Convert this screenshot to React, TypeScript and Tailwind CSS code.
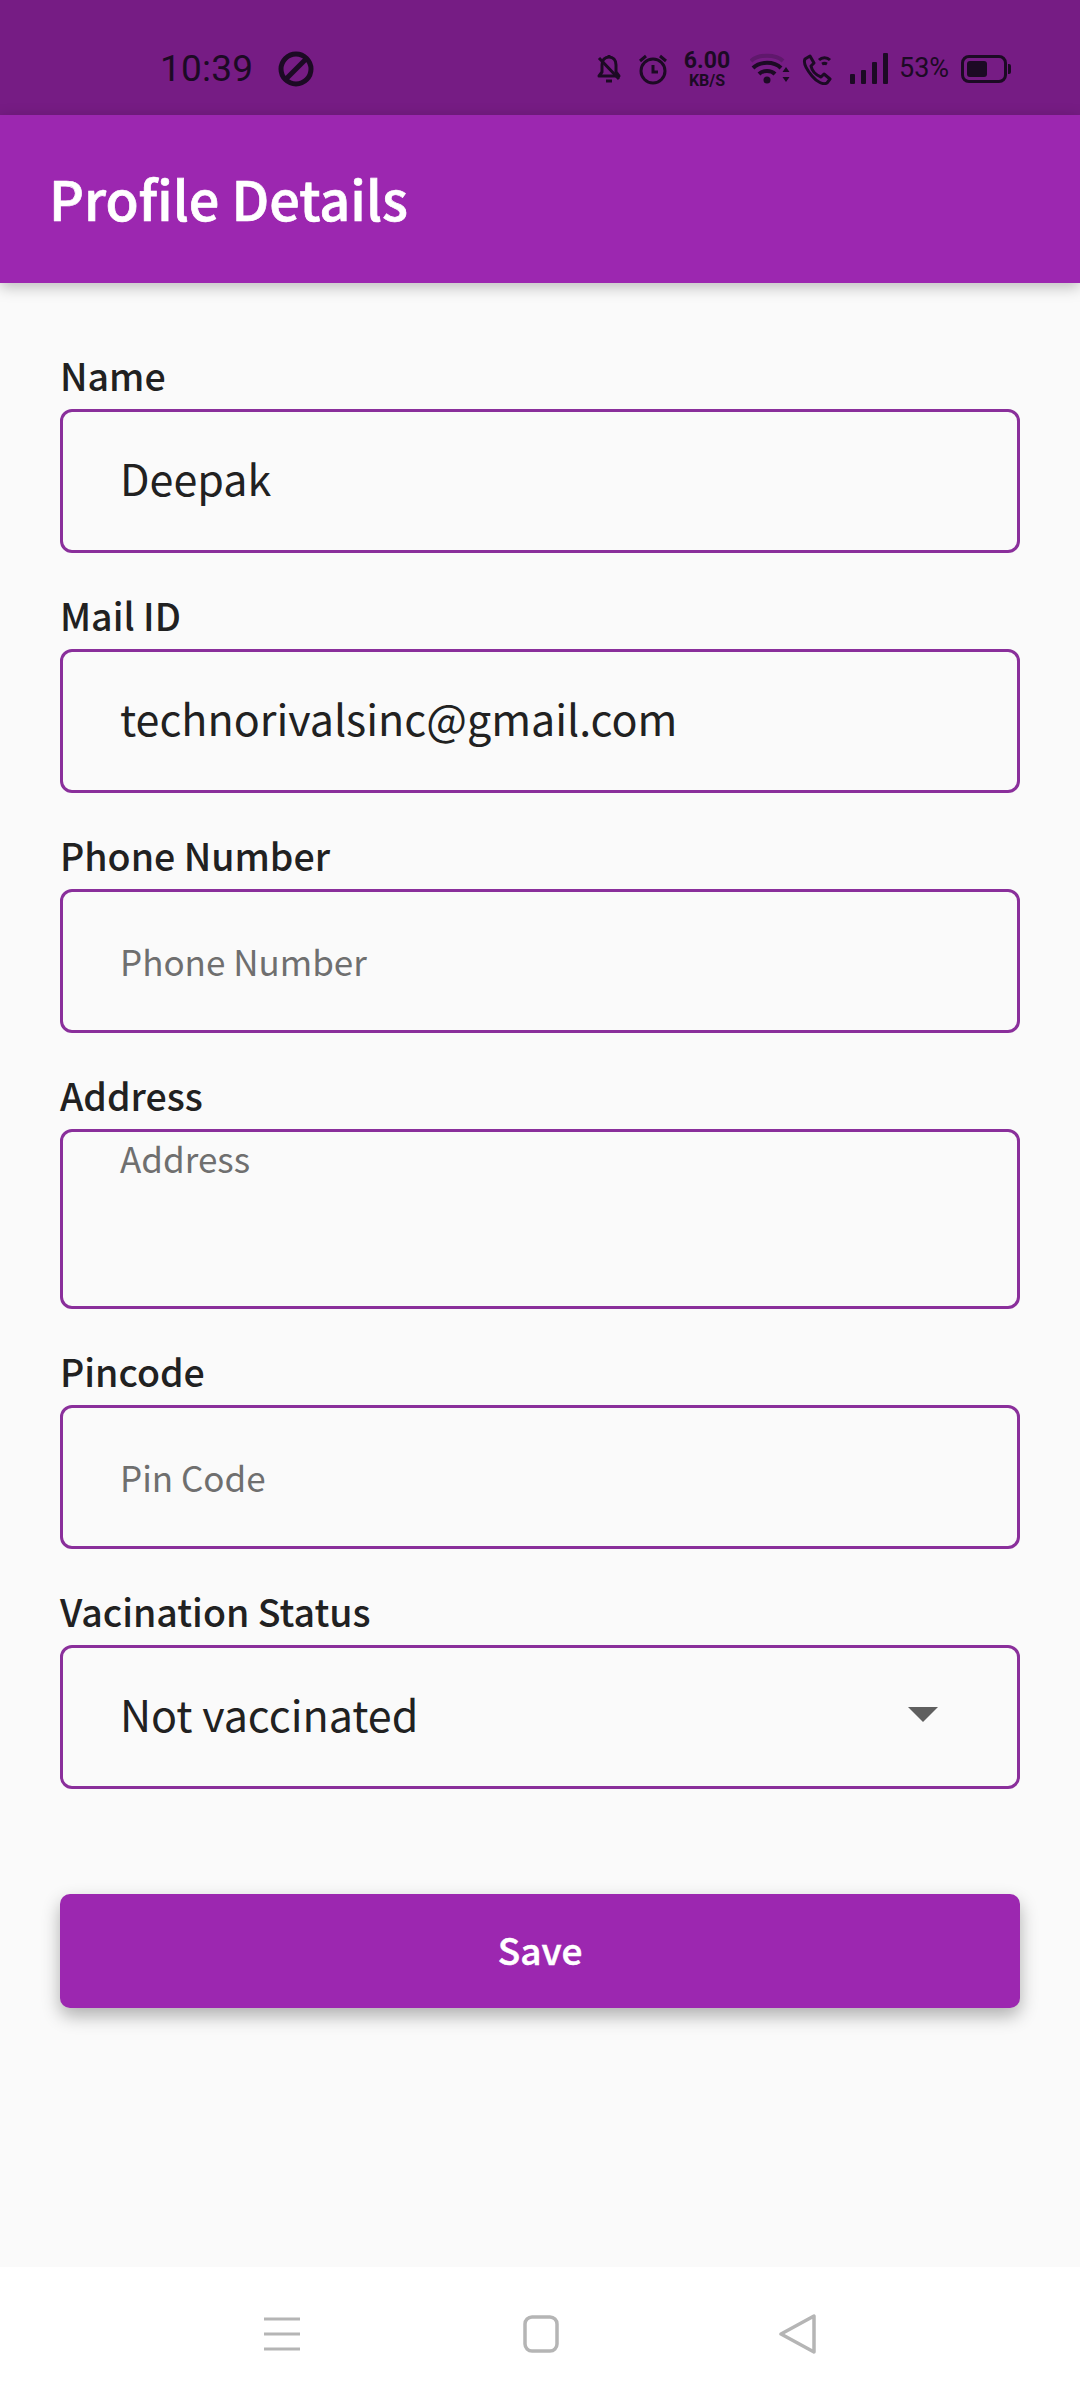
import React from 'react';

function Field({ label, value, placeholder, tall }: { label: string; value?: string; placeholder?: string; tall?: boolean }) {
  return (
    <div className="flex flex-col">
      <label className="h-[56px] text-[37.5px] leading-[44px] font-medium text-[#212121]">{label}</label>
      <div
        className={`flex rounded-[12px] border-[3px] border-[#8a2f9b] pl-[57px] ${
          tall ? 'h-[180px] items-start' : 'h-[144px] items-center'
        }`}
      >
        {value ? (
          <span className="mt-[-7px] text-[43px] text-[#212121]">{value}</span>
        ) : (
          <span className={`text-[35px] leading-[56px] text-[#6f6f6f] ${tall ? 'mt-[-2px]' : 'mt-[-1px]'}`}>{placeholder}</span>
        )}
      </div>
    </div>
  );
}

function StatusBar() {
  return (
    <div className="flex h-[115px] items-center bg-[#761c84] pl-[160px] pt-[22px] text-[#1c0a24]">
      <span className="w-[118px] font-['Roboto',sans-serif] text-[37px] font-normal tracking-[0.2px]">10:39</span>
      <svg width="36" height="36" viewBox="0 0 36 36" fill="none" stroke="currentColor" strokeWidth="5">
        <circle cx="18" cy="18" r="15" />
        <path d="M8 28 28 8" />
      </svg>
      <div className="ml-[282px] flex items-center">
        <svg width="26" height="34" viewBox="0 0 26 34" fill="none" stroke="currentColor" strokeWidth="3">
          <path d="M13 3v3M6 13c0-5 3-8 7-8s7 3 7 8v7l3 4H3l3-4z" strokeLinejoin="round" />
          <path d="M10 29h6M3 6l20 21" />
        </svg>
        <svg className="ml-[16px]" width="30" height="32" viewBox="0 0 30 32" fill="none" stroke="currentColor" strokeWidth="3">
          <circle cx="15" cy="18" r="12" />
          <path d="M15 12v7h5M2 8l6-5M28 8l-6-5" />
        </svg>
        <div className="ml-[14px] flex w-[50px] flex-col items-center font-['Roboto',sans-serif] font-bold">
          <span className="h-[21px] text-[23px] leading-[20px]">6.00</span>
          <span className="h-[15px] text-[16px] leading-[17px]">KB/S</span>
        </div>
        <svg className="ml-[18px]" width="40" height="32" viewBox="0 0 40 32" fill="none" strokeWidth="4">
          <path d="M1 8C8 1 26 1 33 8" stroke="currentColor" strokeOpacity="0.25" />
          <path d="M3 15c7-7 21-7 28 0M9 21c4-4 12-4 16 0" stroke="currentColor" />
          <circle cx="17" cy="27" r="3.5" fill="currentColor" />
          <path d="M36 14l-3.500 5h7zM36 29l-3.500-5h7z" fill="currentColor" strokeWidth="0" />
        </svg>
        <svg className="ml-[11px]" width="32" height="32" viewBox="0 0 30 32" fill="none" stroke="currentColor" strokeWidth="3">
          <path d="M3 6l5-3 4 7-3 3c1 5 5 9 10 11l3-3 6 5-3 4c-4 2-10-1-15-7S1 10 3 6z" strokeLinejoin="round" />
          <path d="M17 7c3-3 8-3 11 0M20 11c2-1 3-1 5 0" />
        </svg>
        <div className="ml-[17px] flex h-[31px] items-end gap-[6px]">
          <span className="h-[10px] w-[5px] rounded-[1px] bg-current" />
          <span className="h-[14px] w-[5px] rounded-[1px] bg-current" />
          <span className="h-[22px] w-[5px] rounded-[1px] bg-current" />
          <span className="h-[31px] w-[5px] rounded-[1px] bg-current" />
        </div>
        <span className="ml-[11px] w-[50px] font-['Roboto',sans-serif] text-[27px] font-normal">53%</span>
        <div className="ml-[12px] flex h-[28px] w-[46px] items-center rounded-[8px] border-[3px] border-current px-[3px]">
          <span className="h-[16px] w-[20px] rounded-[3px] bg-current" />
        </div>
        <span className="ml-[1px] h-[10px] w-[3px] rounded-r-[2px] bg-current" />
      </div>
    </div>
  );
}

function NavBar() {
  return (
    <div className="flex h-[133px] items-center bg-white pt-[1px] text-[#b5b5b5]">
      <svg className="ml-[263px]" width="38" height="36" viewBox="0 0 38 36" fill="none" stroke="currentColor" strokeWidth="3">
        <path d="M1 3h36M1 18h36M1 33h36" />
      </svg>
      <svg className="ml-[222px]" width="36" height="38" viewBox="0 0 36 38" fill="none" stroke="currentColor" strokeWidth="3.5">
        <rect x="2" y="2" width="32" height="34" rx="7" />
      </svg>
      <svg className="ml-[220px]" width="38" height="42" viewBox="0 0 38 42" fill="none" stroke="currentColor" strokeWidth="3.5" strokeLinejoin="round">
        <path d="M35 3v36L2 21z" />
      </svg>
    </div>
  );
}

export default function App() {
  return (
    <div className="flex h-[2400px] w-[1080px] flex-col overflow-hidden bg-[#fafafa] font-['Noto_Sans_CJK_SC','Noto_Sans',sans-serif]">
      <StatusBar />
      <header className="relative z-10 flex h-[168px] items-center bg-[#9c27b0] pl-[49px] shadow-[0_4px_14px_rgba(0,0,0,0.25)]">
        <h1 className="mt-[-3px] text-[54px] font-medium text-white [-webkit-text-stroke:0.7px_white]">Profile Details</h1>
      </header>
      <main className="flex flex-1 flex-col px-[60px] pt-[70px]">
        <div className="flex flex-col gap-[40px]">
          <Field label="Name" value="Deepak" />
          <Field label="Mail ID" value="technorivalsinc@gmail.com" />
          <Field label="Phone Number" placeholder="Phone Number" />
          <Field label="Address" placeholder="Address" tall />
          <Field label="Pincode" placeholder="Pin Code" />
          <div className="flex flex-col">
            <label className="h-[56px] text-[37.5px] leading-[44px] font-medium text-[#212121]">Vacination Status</label>
            <div className="flex h-[144px] items-center justify-between rounded-[12px] border-[3px] border-[#8a2f9b] pl-[57px] pr-[79px]">
              <span className="mt-[-7px] text-[43px] text-[#212121]">Not vaccinated</span>
              <svg width="30" height="16" viewBox="0 0 30 16" className="mt-[-4px]">
                <path d="M0 0h30L15 15z" fill="#5f5f5f" />
              </svg>
            </div>
          </div>
        </div>
        <button className="mt-[105px] h-[114px] rounded-[10px] bg-[#9c27b0] pb-[3px] text-[37px] font-medium text-white shadow-[0_8px_18px_rgba(0,0,0,0.3)] [-webkit-text-stroke:0.5px_white]">
          Save
        </button>
      </main>
      <NavBar />
    </div>
  );
}
